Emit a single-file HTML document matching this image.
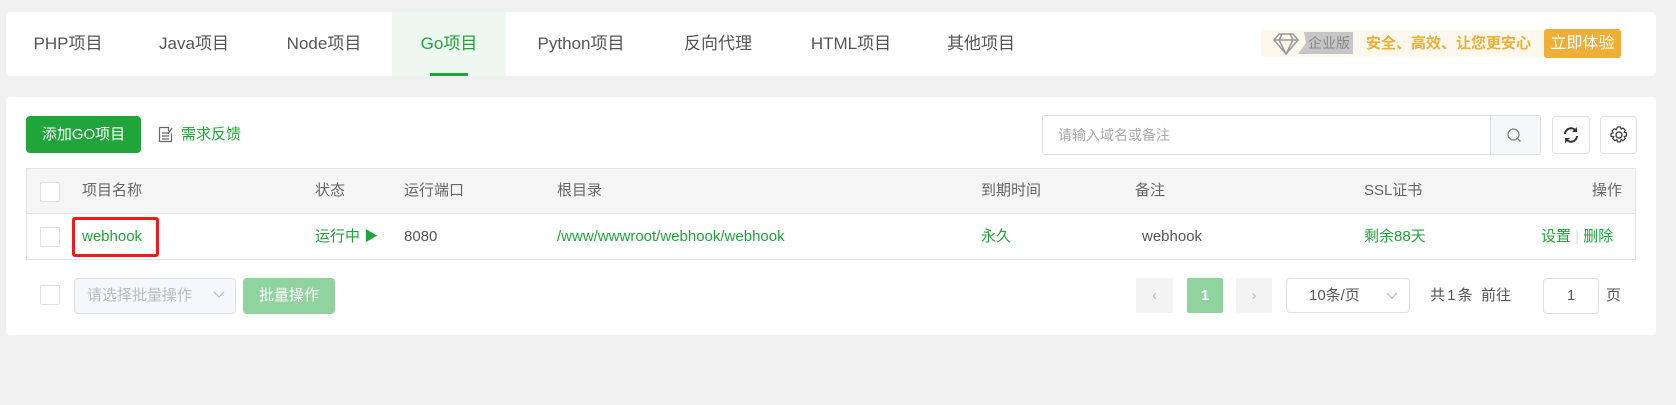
<!DOCTYPE html>
<html><head><meta charset="utf-8"><style>
*{box-sizing:border-box;margin:0;padding:0}
body{width:1676px;height:405px;background:#f0f0f0;font-family:"Liberation Sans","Noto Sans CJK SC",sans-serif;font-size:15px;color:#555;position:relative;overflow:hidden}
.a{position:absolute}
.card{background:#fff;border-radius:4px}
.tab{position:absolute;top:12px;height:64px;line-height:64px;font-size:17px;color:#555;transform:translateX(-50%);white-space:nowrap}
.g{color:#20a53a}
.cb{position:absolute;width:20px;height:20px;border:1px solid #dcdfe6;border-radius:2px;background:#fff}
.th{position:absolute;top:168px;height:46px;line-height:46px;color:#666;font-size:15px}
.td{position:absolute;top:214px;height:45px;line-height:45px;font-size:15px}
.box{position:absolute;border:1px solid #dcdfe6;border-radius:3px;background:#fff}
</style></head><body>
<div class="a card" style="left:6px;top:12px;width:1650px;height:64px"></div>
<div class="a" style="left:392px;top:12px;width:114px;height:64px;background:#eff8f0"></div>
<div class="a" style="left:430px;top:73px;width:38px;height:3px;background:#20a53a"></div>
<div class="tab" style="left:68px">PHP项目</div>
<div class="tab" style="left:194px">Java项目</div>
<div class="tab" style="left:324px">Node项目</div>
<div class="tab g" style="left:449px">Go项目</div>
<div class="tab" style="left:581px">Python项目</div>
<div class="tab" style="left:718px">反向代理</div>
<div class="tab" style="left:851px">HTML项目</div>
<div class="tab" style="left:981px">其他项目</div>

<div class="a" style="left:1261px;top:30px;width:282px;height:27px;background:#fdf8ee;border-radius:3px"></div>
<svg class="a" style="left:1272px;top:31px" width="30" height="26" viewBox="0 0 30 26"><path d="M7 3h14l5 6-12 14L2 9z M2 9h24 M10 3l-3 6 7 14 7-14-3-6" fill="none" stroke="#999" stroke-width="1.5"/></svg>
<div class="a" style="left:1298px;top:32px;width:55px;height:22px;background:#c6c6c6;clip-path:polygon(6px 0,100% 0,100% 100%,0 100%,8px 50%)"></div>
<div class="a" style="left:1308px;top:32px;line-height:22px;font-size:14px;color:#888">企业版</div>
<div class="a" style="left:1366px;top:30px;line-height:27px;font-size:15px;color:#efae35;font-weight:bold">安全、高效、让您更安心</div>
<div class="a" style="left:1544px;top:29px;width:77px;height:29px;background:#efae35;border-radius:3px;color:#fff;font-size:16px;line-height:29px;text-align:center">立即体验</div>

<div class="a card" style="left:6px;top:97px;width:1650px;height:238px"></div>
<div class="a" style="left:26px;top:116px;width:115px;height:37px;background:#20a53a;border-radius:4px;color:#fff;line-height:37px;text-align:center;font-size:15px">添加GO项目</div>
<svg class="a" style="left:158px;top:126px" width="16" height="17" viewBox="0 0 16 17"><path d="M1.5 1.5h9v4 M1.5 1.5v14h12v-8 M4 7h6 M4 10h7 M4 13h7 M10 8l4-6" fill="none" stroke="#666" stroke-width="1.2"/></svg>
<div class="a g" style="left:181px;top:116px;line-height:37px;font-size:15px">需求反馈</div>

<div class="box" style="left:1042px;top:115px;width:499px;height:40px"></div>
<div class="a" style="left:1490px;top:116px;width:50px;height:38px;background:#f5f7fa;border-left:1px solid #dcdfe6"></div>
<div class="a" style="left:1058px;top:115px;line-height:40px;color:#aaa;font-size:14px">请输入域名或备注</div>
<svg class="a" style="left:1506px;top:127px" width="17" height="17" viewBox="0 0 17 17"><circle cx="7.5" cy="7.5" r="5.5" fill="none" stroke="#888" stroke-width="1.3"/><path d="M11.5 11.5l3 3" stroke="#888" stroke-width="1.3"/></svg>
<div class="box" style="left:1552px;top:116px;width:38px;height:38px;border-radius:4px"></div>
<svg class="a" style="left:1562px;top:126px" width="18" height="18" viewBox="0 0 18 18"><path d="M3 8a6 6 0 0 1 11-3 M15 10a6 6 0 0 1-11 3" fill="none" stroke="#333" stroke-width="2"/><path d="M15 1v5h-5z M3 17v-5h5z" fill="#333"/></svg>
<div class="box" style="left:1600px;top:116px;width:37px;height:38px;border-radius:4px"></div>
<svg class="a" style="left:1609px;top:125px" width="20" height="20" viewBox="0 0 20 20"><circle cx="10" cy="10" r="3" fill="none" stroke="#444" stroke-width="1.4"/><path d="M8.5 2h3l.6 2.2 2-1.1 2.2 2.2-1.1 2 2.2.6v3l-2.2.6 1.1 2-2.2 2.2-2-1.1-.6 2.2h-3l-.6-2.2-2 1.1-2.2-2.2 1.1-2L2 11.5v-3l2.2-.6-1.1-2 2.2-2.2 2 1.1z" fill="none" stroke="#444" stroke-width="1.3" stroke-linejoin="round"/></svg>

<div class="a" style="left:26px;top:168px;width:1610px;height:92px;border:1px solid #e4e4e4"></div>
<div class="a" style="left:27px;top:169px;width:1608px;height:45px;background:#f5f5f5;border-bottom:1px solid #e4e4e4"></div>
<div class="cb" style="left:40px;top:182px"></div>
<div class="th" style="left:82px">项目名称</div>
<div class="th" style="left:315px">状态</div>
<div class="th" style="left:404px">运行端口</div>
<div class="th" style="left:557px">根目录</div>
<div class="th" style="left:981px">到期时间</div>
<div class="th" style="left:1135px">备注</div>
<div class="th" style="left:1364px">SSL证书</div>
<div class="th" style="left:1592px">操作</div>

<div class="cb" style="left:40px;top:227px"></div>
<div class="td g" style="left:82px">webhook</div>
<div class="a" style="left:72px;top:217px;width:87px;height:40px;border:3px solid #ee1b1b;border-radius:3px"></div>
<div class="td g" style="left:315px">运行中 <span style="font-size:14px">▶</span></div>
<div class="td" style="left:404px">8080</div>
<div class="td g" style="left:557px">/www/wwwroot/webhook/webhook</div>
<div class="td g" style="left:981px">永久</div>
<div class="td" style="left:1142px">webhook</div>
<div class="td g" style="left:1364px">剩余88天</div>
<div class="td g" style="left:1541px">设置 <span style="color:#ddd">|</span> 删除</div>

<div class="cb" style="left:40px;top:285px"></div>
<div class="box" style="left:74px;top:278px;width:162px;height:36px;background:#f5f7fa;border-radius:4px"></div>
<div class="a" style="left:87px;top:278px;line-height:36px;color:#bbb;font-size:15px">请选择批量操作</div>
<svg class="a" style="left:213px;top:291px" width="12" height="8" viewBox="0 0 12 8"><path d="M1 1l5 5 5-5" fill="none" stroke="#bbb" stroke-width="1.2"/></svg>
<div class="a" style="left:243px;top:278px;width:92px;height:36px;background:#90d39e;border-radius:4px;color:#fff;line-height:36px;text-align:center;font-size:15px">批量操作</div>

<div class="a" style="left:1136px;top:278px;width:37px;height:35px;background:#f4f4f5;border-radius:2px;color:#bbb;text-align:center;line-height:35px">‹</div>
<div class="a" style="left:1187px;top:278px;width:36px;height:35px;background:#90d39e;border-radius:2px;color:#fff;text-align:center;line-height:35px;font-weight:bold">1</div>
<div class="a" style="left:1236px;top:278px;width:36px;height:35px;background:#f4f4f5;border-radius:2px;color:#bbb;text-align:center;line-height:35px">›</div>
<div class="box" style="left:1286px;top:278px;width:124px;height:35px;border-radius:4px"></div>
<div class="a" style="left:1309px;top:278px;line-height:35px;color:#555">10条/页</div>
<svg class="a" style="left:1386px;top:292px" width="12" height="8" viewBox="0 0 12 8"><path d="M1 1l5 5 5-5" fill="none" stroke="#bbb" stroke-width="1.2"/></svg>
<div class="a" style="left:1430px;top:278px;line-height:35px;color:#555;letter-spacing:-1px">共 1 条</div>
<div class="a" style="left:1481px;top:278px;line-height:35px;color:#555">前往</div>
<div class="box" style="left:1543px;top:278px;width:56px;height:36px;border-radius:4px;text-align:center;line-height:34px;color:#555">1</div>
<div class="a" style="left:1606px;top:278px;line-height:35px;color:#555">页</div>
</body></html>
